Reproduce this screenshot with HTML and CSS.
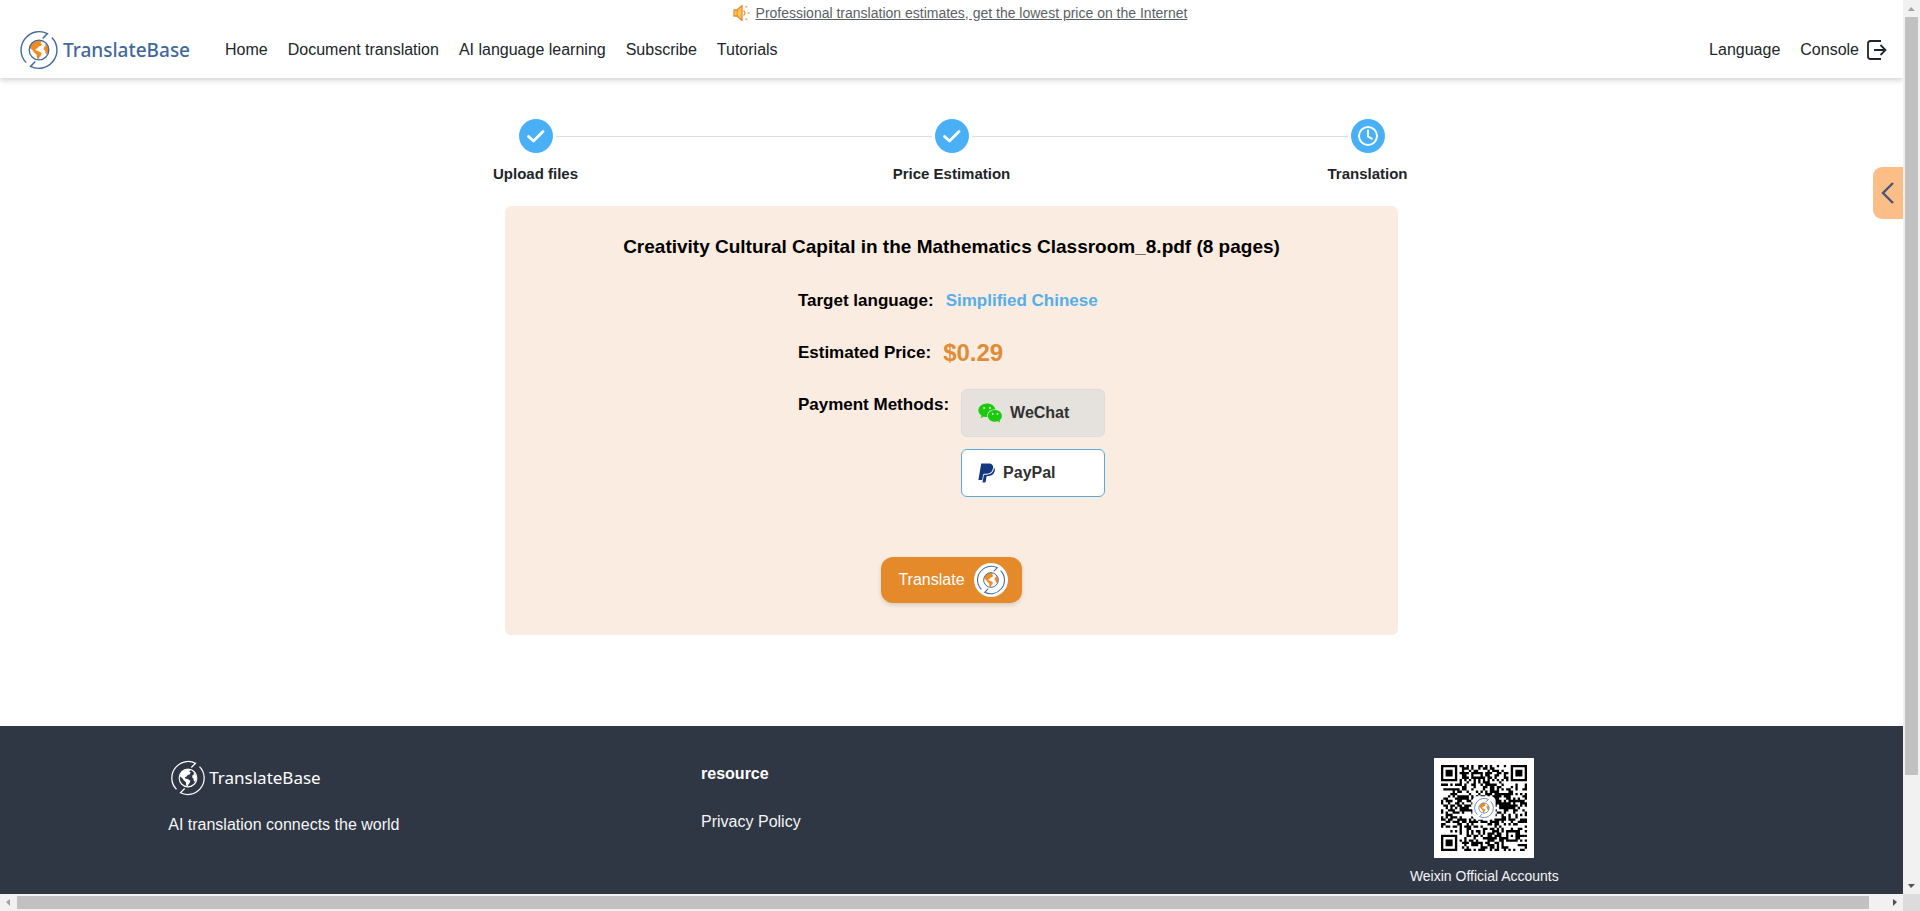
FILE: index.html
```html
<!DOCTYPE html>
<html lang="en">
<head>
  <meta charset="UTF-8">
  <title>TranslateBase</title>
  <link rel="stylesheet" href="styles.css">
</head>
<body>
  <!-- Shared logo mark -->
  <svg class="symbols" aria-hidden="true">
    <symbol id="logo-mark" viewBox="0 0 40 40">
      <path d="M7.2 32.6A18 18 0 0 1 6.6 8A18 18 0 0 1 28.4 3.6L23.7 8.4" fill="none" stroke="currentColor" stroke-width="1.4"/>
      <path d="M32.8 7.4A18 18 0 0 1 33.4 32A18 18 0 0 1 11.6 36.4L16.3 31.6" fill="none" stroke="currentColor" stroke-width="1.4"/>
      <path class="land" d="M11 18C11.600 13.500 15.500 10.600 20 10.400L22.800 11.200L21.400 12.900L23 14L21.800 16L19.600 16.600L18.200 18.600L16.400 19L17 20.600L19.600 21.200L22.600 23L21.800 25.600L20.400 27.200L19.800 29.400L18 28.200L17.600 24.800L15.200 22.600L13.600 20.200Z"/>
      <path class="land" d="M26.200 13.600C28.600 15.600 29.600 18.600 29.200 22L27.800 24.400L26.400 23L26 20.600L24.600 19.200L25 17L26.600 16Z"/>
      <circle cx="20" cy="20" r="9.8" fill="none" stroke="currentColor" stroke-width="1.3"/>
    </symbol>
  </svg>

  <div class="window">
    <div class="page">
      <header>
        <div class="notice">
          <svg width="18" height="18" viewBox="0 0 18 18" aria-hidden="true">
            <path d="M2 6h3l5-4.5v15L5 12H2z" fill="#ffc64a" stroke="#e88a34" stroke-width="1.3" stroke-linejoin="round"/>
            <path d="M5.2 6v6" stroke="#e88a34"/>
            <path d="M11.5 6.5Q14.5 9 11.5 11.5" fill="none" stroke="#e88a34" stroke-width="1.2"/>
            <path d="M13.5 3.5l1.5-1.5M15.5 9h2M13.5 14.5l1.5 1.5" stroke="#f0a060" stroke-width="1.4"/>
          </svg>
          <a href="#">Professional translation estimates, get the lowest price on the Internet</a>
        </div>
        <nav>
          <a href="#" class="logo">
            <svg class="logo-icon"><use href="#logo-mark"/></svg>
            <span>TranslateBase</span>
          </a>
          <div class="nav-links">
            <a href="#">Home</a>
            <a href="#">Document translation</a>
            <a href="#">AI language learning</a>
            <a href="#">Subscribe</a>
            <a href="#">Tutorials</a>
          </div>
          <div class="nav-user">
            <a href="#">Language</a>
            <a href="#" class="console-link">Console
              <svg width="20" height="20" viewBox="0 0 20 20" fill="none" stroke="#212529" stroke-width="1.8" aria-hidden="true">
                <path d="M14 1H3.5Q1 1 1 3.5v13Q1 19 3.500 19H14"/>
                <path d="M7 10h11.5M13.500 5L18.500 10L13.500 15"/>
              </svg>
            </a>
          </div>
        </nav>
      </header>

      <main>
        <ol class="steps">
          <li>
            <div class="step-track">
              <span class="step-line hidden"></span>
              <svg class="step-icon" viewBox="0 0 34 34"><circle cx="17" cy="17" r="17"/><path d="M9.5 17.5L14.5 22L24 12.5" stroke-width="2.8"/></svg>
              <span class="step-line"></span>
            </div>
            <span class="step-label">Upload files</span>
          </li>
          <li>
            <div class="step-track">
              <span class="step-line"></span>
              <svg class="step-icon" viewBox="0 0 34 34"><circle cx="17" cy="17" r="17"/><path d="M9.5 17.5L14.5 22L24 12.5" stroke-width="2.8"/></svg>
              <span class="step-line"></span>
            </div>
            <span class="step-label">Price Estimation</span>
          </li>
          <li>
            <div class="step-track">
              <span class="step-line"></span>
              <svg class="step-icon" viewBox="0 0 34 34"><circle cx="17" cy="17" r="17"/><path d="M26 17a9 9 0 1 1-18 0a9 9 0 1 1 18 0M17 11.500v6l3.800 2.200" stroke-width="2"/></svg>
              <span class="step-line hidden"></span>
            </div>
            <span class="step-label">Translation</span>
          </li>
        </ol>

        <section class="card">
          <h1>Creativity Cultural Capital in the Mathematics Classroom_8.pdf (8 pages)</h1>
          <div class="details">
            <div class="row">
              <span>Target language:</span>
              <span class="language">Simplified Chinese</span>
            </div>
            <div class="row">
              <span>Estimated Price:</span>
              <span class="price">$0.29</span>
            </div>
            <div class="row row-payment">
              <span>Payment Methods:</span>
              <div class="methods">
                <button type="button" class="method">
                  <svg width="24" height="20" viewBox="0 0 24 20" aria-hidden="true">
                    <path d="M9 0.5C4.2 0.5 0.4 3.5 0.4 7.3C0.4 9.5 1.6 11.4 3.5 12.6L2.8 15.2L5.8 13.6Q7.5 14.2 9.4 14.1C8.3 9.8 12 6.2 17.4 6.2C16.6 2.9 13.2 0.5 9 0.5Z" fill="#1aca0c"/>
                    <path d="M17 7.1C13 7.1 9.9 9.7 9.9 12.9C9.9 16.2 13 18.7 17 18.7Q18.3 18.7 19.6 18.3L22.1 19.6L21.5 17.3C23 16.2 23.9 14.7 23.9 12.9C23.9 9.7 20.8 7.1 17 7.1Z" fill="#1aca0c"/>
                    <g fill="#e5e1dc"><circle cx="6.2" cy="5" r="1.1"/><circle cx="12" cy="5" r="1.1"/><circle cx="14.7" cy="11" r="0.9"/><circle cx="19.4" cy="11" r="0.9"/></g>
                  </svg>
                  WeChat
                </button>
                <button type="button" class="method selected">
                  <svg width="17" height="20" viewBox="0 0 17 20" aria-hidden="true">
                    <path d="M3.2 0.5H10.5C14 0.5 15.6 2.3 15 5.2C14.3 9 11.8 10.7 8 10.7H6.2C5.7 10.7 5.3 11 5.2 11.5L4.2 17H0.4Z" fill="#15377f"/>
                    <path d="M15.9 4.3C17 5.5 17.1 7 16.5 8.7C15.5 11.7 13.2 13 10.2 13H9.4C8.9 13 8.6 13.3 8.5 13.8L7.7 18.5Q7.6 19.5 6.6 19.5H4.5L5.9 11.8H8.3C12.5 11.8 15.3 9.5 15.9 5.6Z" fill="#15377f"/>
                  </svg>
                  PayPal
                </button>
              </div>
            </div>
          </div>
          <button type="button" class="translate-button">
            Translate
            <span class="badge"><svg class="badge-icon"><use href="#logo-mark"/></svg></span>
          </button>
        </section>
      </main>

      <footer>
        <div class="footer-columns">
          <div class="footer-about">
            <a href="#" class="logo logo-light">
              <svg class="logo-icon"><use href="#logo-mark"/></svg>
              <span>TranslateBase</span>
            </a>
            <p>AI translation connects the world</p>
          </div>
          <div class="footer-links">
            <h2>resource</h2>
            <a href="#">Privacy Policy</a>
          </div>
          <div class="footer-qr">
            <div class="qr">
              <svg viewBox="0 0 43 43" role="img" aria-label="QR code">
                <path id="qr-modules"/>
                <rect x="16.5" y="16.5" width="10" height="10" rx="2" fill="#fff"/>
                <use href="#logo-mark" x="17" y="17" width="9" height="9"/>
              </svg>
            </div>
            <span>Weixin Official Accounts</span>
          </div>
        </div>
      </footer>

      <button type="button" class="side-tab" aria-label="Open panel">
        <svg width="14" height="22" viewBox="0 0 14 22" aria-hidden="true"><path d="M12 1L2 11L12 21" fill="none" stroke="#41597d" stroke-width="2.4"/></svg>
      </button>
    </div>

    <div class="scrollbar vertical">
      <i class="arrow up"></i>
      <div class="thumb"></div>
      <div class="rest"></div>
      <i class="arrow down"></i>
    </div>
    <div class="scrollbar horizontal">
      <i class="arrow left"></i>
      <div class="thumb"></div>
      <div class="rest"></div>
      <i class="arrow right"></i>
    </div>
    <div class="corner"></div>
  </div>

  <script src="qr.js"></script>
</body>
</html>
```
FILE: styles.css
```css
* {
  box-sizing: border-box;
}
body {
  margin: 0;
  font-family: "Liberation Sans", Arial, sans-serif;
  font-size: 16px;
  line-height: 24px;
  color: #212529;
  background: #fff;
}
a {
  color: inherit;
  text-decoration: none;
}
button {
  font: inherit;
  cursor: pointer;
}
svg {
  flex-shrink: 0;
}
.symbols {
  position: absolute;
  width: 0;
  height: 0;
}
.land {
  fill: var(--land, #f58a20);
}
.window {
  display: grid;
  grid-template-columns: minmax(0, 1fr) 17px;
  grid-template-rows: minmax(0, 1fr) 17px;
  height: 100vh;
}
.page {
  position: relative;
  display: flex;
  flex-direction: column;
  overflow: hidden;
}

/* Header */
header {
  padding-bottom: 3px;
  box-shadow: 0 2px 6px rgba(0, 0, 0, 0.2);
}
.notice {
  display: flex;
  justify-content: center;
  align-items: center;
  gap: 6px;
  height: 25px;
  padding-left: 16px;
  font-size: 14px;
  color: #5c5f63;
}
.notice a {
  text-decoration: underline;
}
nav {
  display: flex;
  align-items: center;
  height: 50px;
  padding: 0 16px 0 19px;
}
.logo {
  display: flex;
  align-items: center;
  gap: 4px;
  font-family: "Noto Sans", sans-serif;
  font-size: 19px;
  font-weight: 500;
  color: #41689c;
}
.logo-icon {
  width: 40px;
  height: 40px;
}
.nav-links, .nav-user {
  display: flex;
  align-items: center;
  gap: 20px;
}
.nav-links {
  margin-left: 35px;
}
.nav-user {
  margin-left: auto;
}
.console-link {
  display: flex;
  align-items: center;
  gap: 8px;
}

/* Steps */
main {
  flex: 1;
  display: flex;
  flex-direction: column;
  align-items: center;
  padding-top: 41px;
}
.steps {
  display: grid;
  grid-template-columns: repeat(3, 1fr);
  width: 66%;
  max-width: 1248px;
  margin: 0 0 20px;
  padding: 0;
  list-style: none;
}
.step-track {
  display: flex;
  align-items: center;
  gap: 3px;
}
.step-line {
  flex: 1;
  height: 1px;
  background: #dcdcdc;
}
.step-line.hidden {
  visibility: hidden;
}
.step-icon {
  width: 34px;
  height: 34px;
  fill: #49b0f8;
}
.step-icon path {
  fill: none;
  stroke: #fff;
  stroke-linecap: round;
  stroke-linejoin: round;
}
.step-label {
  display: block;
  margin-top: 9px;
  font-size: 15px;
  font-weight: bold;
  text-align: center;
}

/* Payment card */
.card {
  display: flex;
  flex-direction: column;
  align-items: center;
  width: 47%;
  min-width: 700px;
  max-width: 893px;
  padding: 28px 20px 32px;
  border-radius: 6px;
  background: #faece0;
  color: #000;
}
.card h1 {
  margin: 0 0 30px;
  font-size: 19px;
  line-height: 25px;
}
.details {
  display: flex;
  flex-direction: column;
  gap: 28px;
  margin-bottom: 60px;
  font-size: 17px;
  font-weight: bold;
}
.row {
  display: flex;
  align-items: center;
  gap: 12px;
}
.row-payment {
  align-items: flex-start;
}
.language {
  color: #55aeea;
}
.price {
  font-size: 24px;
  color: #e08c36;
}
.methods {
  display: flex;
  flex-direction: column;
  gap: 12px;
  margin-top: -4px;
}
.method {
  display: flex;
  align-items: center;
  gap: 8px;
  width: 144px;
  height: 48px;
  padding: 0 16px;
  border: 1px solid #dcdcdc;
  border-radius: 6px;
  background: #e5e1dc;
  font-size: 16px;
  color: #303133;
}
.method.selected {
  border-color: #5aa9d6;
  background: #fff;
}
.translate-button {
  display: flex;
  align-items: center;
  gap: 9px;
  height: 46px;
  padding: 0 14px 0 17px;
  border: none;
  border-radius: 12px;
  background: #e58a2b;
  box-shadow: 0 2px 4px rgba(0, 0, 0, 0.14);
  color: #fff;
}
.badge {
  display: flex;
  align-items: center;
  justify-content: center;
  width: 34px;
  height: 34px;
  border-radius: 50%;
  background: #fff;
  color: #41689c;
}
.badge-icon {
  width: 30px;
  height: 30px;
}

/* Footer */
footer {
  min-height: 168px;
  background: #303744;
  color: #f4f5f6;
}
.footer-columns {
  display: grid;
  grid-template-columns: repeat(3, 1fr);
  width: 84%;
  margin: 0 auto;
  padding-top: 32px;
}
.footer-columns > div {
  padding: 0 16px;
}
.logo-light {
  --land: #fff;
  gap: 3px;
  height: 40px;
  padding-left: 2px;
  font-size: 17px;
  font-weight: 400;
  color: #fff;
}
.logo-light .logo-icon {
  width: 36px;
  height: 36px;
}
.footer-about p {
  margin: 15px 0 0;
}
.footer-links {
  padding-top: 4px;
}
.footer-links h2 {
  margin: 4px 0 24px;
  font-size: 16px;
  line-height: 24px;
  color: #fff;
}
.footer-qr {
  display: flex;
  flex-direction: column;
  align-items: center;
  gap: 6px;
  font-size: 14px;
}
.qr {
  width: 100px;
  height: 100px;
  background: #fff;
  color: #41689c;
}
.qr svg {
  display: block;
}
#qr-modules {
  fill: #000;
}

.side-tab {
  position: absolute;
  top: 167px;
  right: 0;
  display: flex;
  align-items: center;
  justify-content: center;
  width: 30px;
  height: 52px;
  padding: 0;
  border: none;
  border-radius: 9px 0 0 9px;
  background: #fbbe86;
}

/* Scrollbars */
.scrollbar {
  display: flex;
  align-items: center;
  background: #f1f1f1;
}
.vertical {
  flex-direction: column;
}
.thumb {
  background: #c1c1c1;
}
.vertical .thumb {
  flex: 758;
  width: 13px;
}
.vertical .rest {
  flex: 102;
}
.horizontal .thumb {
  flex: 1852;
  height: 13px;
}
.horizontal .rest {
  flex: 17;
}
.arrow {
  width: 17px;
  height: 17px;
  background: #505050;
}
.up {
  background: #a3a3a3;
  clip-path: polygon(5px 11px, 12px 11px, 8px 7px);
}
.down {
  clip-path: polygon(5px 7px, 12px 7px, 8px 11px);
}
.left {
  background: #a3a3a3;
  clip-path: polygon(10px 5px, 10px 12px, 6px 8px);
}
.right {
  clip-path: polygon(7px 5px, 7px 12px, 11px 8px);
}
.corner {
  background: #dcdcdc;
}
```
FILE: qr.js
```js
// Fill the 37x37 module grid, with a 3 module quiet zone
const SIZE = 37;
const QUIET = 3;
let seed = 20;

function nextBit() {
  seed = (seed * 1103515245 + 12345) % 2147483648;
  return seed / 2147483648 < 0.5;
}

// Finder pattern cell, or null when the cell is outside of it
function finder(x, y, left, top) {
  const dx = Math.abs(x - left - 3);
  const dy = Math.abs(y - top - 3);
  const ring = Math.max(dx, dy);
  if (ring > 4) return null;
  return ring === 3 || ring < 2;
}

function isDark(x, y) {
  const corners = [[0, 0], [SIZE - 7, 0], [0, SIZE - 7]];
  for (const [left, top] of corners) {
    const cell = finder(x, y, left, top);
    if (cell !== null) return cell;
  }
  const ring = Math.max(Math.abs(x - 30), Math.abs(y - 30));
  if (ring < 3) return ring !== 1;
  if (x === 6 || y === 6) return (x + y) % 2 === 0;
  return nextBit();
}

let d = '';
for (let y = 0; y < SIZE; y++) {
  for (let x = 0; x < SIZE; x++) {
    if (isDark(x, y)) d += `M${x + QUIET} ${y + QUIET}h1v1h-1z`;
  }
}
document.getElementById('qr-modules').setAttribute('d', d);
```
